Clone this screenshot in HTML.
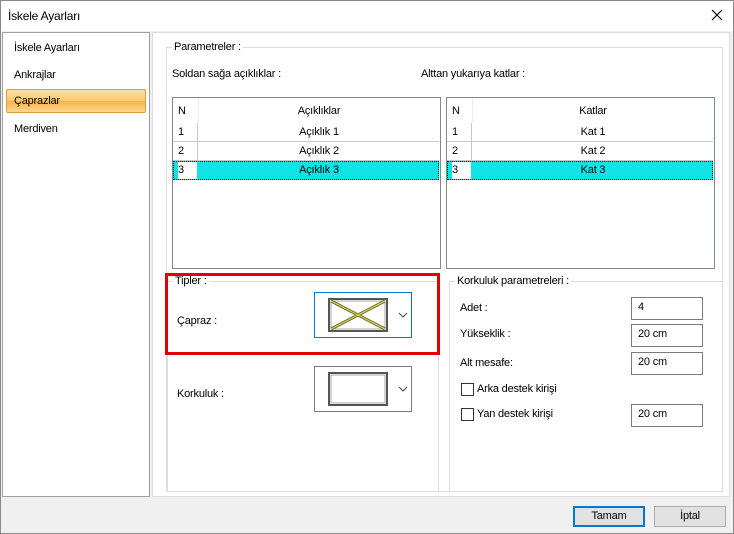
<!DOCTYPE html>
<html><head><style>
*{margin:0;padding:0;box-sizing:border-box}
body{width:734px;height:534px;overflow:hidden;background:#f0f0f0;font-family:"Liberation Sans",sans-serif;font-size:11px;letter-spacing:-0.2px;color:#000;position:relative}
.a{position:absolute}
.win{left:0;top:0;width:734px;height:534px;border:1px solid #888}
.title{left:1px;top:1px;width:732px;height:30px;background:#fff}
.panel{background:#fff;border:1px solid #a0a0a0}
.gb{border:1px solid #dcdcdc}
.leg{background:#fff;padding:0 2px}
.tbl{border:1px solid #828790;background:#fff}
.row{position:absolute;left:0;width:266px;height:19px;border-bottom:1px solid #c8c8c8}
.n{position:absolute;left:5px;top:3px}
.c{position:absolute;left:26px;right:0;top:3px;text-align:center}
.inp{border:1px solid #7a7a7a;background:#fff;width:72px;height:23px;padding:3px 6px}
.cb{width:13px;height:13px;border:1px solid #333;background:#fff}
.btn{width:72px;height:21px;border:1px solid #adadad;background:#e1e1e1;text-align:center;line-height:19px}
</style></head><body>
<div class="a win"></div>
<div class="a title"></div>
<div class="a" style="left:8px;top:9px;font-size:12px">İskele Ayarları</div>
<svg class="a" style="left:711px;top:9px" width="12" height="12"><path d="M1 1L11 11M11 1L1 11" stroke="#000" stroke-width="1.2"/></svg>

<div class="a panel" style="left:2px;top:32px;width:148px;height:465px"></div>
<div class="a" style="left:14px;top:42px">İskele Ayarları</div>
<div class="a" style="left:14px;top:69px">Ankrajlar</div>
<div class="a" style="left:6px;top:89px;width:140px;height:24px;border:1px solid #d9a040;border-radius:2px;background:linear-gradient(#fde0a8,#fbc86c 50%,#f9b24a 51%,#fcd690)"></div>
<div class="a" style="left:14px;top:95px">Çaprazlar</div>
<div class="a" style="left:14px;top:123px">Merdiven</div>

<div class="a panel" style="left:152px;top:32px;width:578px;height:465px;border-color:#dcdcdc"></div>
<div class="a gb" style="left:166px;top:47px;width:557px;height:445px"></div>
<div class="a leg" style="left:172px;top:41px">Parametreler :</div>
<div class="a" style="left:172px;top:68px">Soldan sağa açıklıklar :</div>
<div class="a" style="left:421px;top:68px">Alttan yukarıya katlar :</div>

<div class="a tbl" style="left:172px;top:97px;width:269px;height:172px">
 <div class="row" style="top:0;height:25px;border:none"><span class="n" style="top:7px">N</span><div class="a" style="left:25px;top:0;width:1px;height:25px;background:#eee"></div><span class="c" style="top:7px">Açıklıklar</span></div>
 <div class="row" style="top:25px"><span class="n">1</span><div class="a" style="left:24px;top:0;width:1px;height:19px;background:#c8c8c8"></div><span class="c">Açıklık 1</span></div>
 <div class="row" style="top:44px"><span class="n">2</span><div class="a" style="left:24px;top:0;width:1px;height:19px;background:#c8c8c8"></div><span class="c">Açıklık 2</span></div>
 <div class="row" style="top:63px;border:1px dotted #000;background:#10e3e3"><div class="a" style="left:4px;top:0;width:19px;height:17px;background:#fff"></div><span class="n" style="left:4px;top:2px">3</span><span class="c" style="top:2px">Açıklık 3</span></div>
</div>
<div class="a tbl" style="left:446px;top:97px;width:269px;height:172px">
 <div class="row" style="top:0;height:25px;border:none"><span class="n" style="top:7px">N</span><div class="a" style="left:25px;top:0;width:1px;height:25px;background:#eee"></div><span class="c" style="top:7px">Katlar</span></div>
 <div class="row" style="top:25px"><span class="n">1</span><div class="a" style="left:24px;top:0;width:1px;height:19px;background:#c8c8c8"></div><span class="c">Kat 1</span></div>
 <div class="row" style="top:44px"><span class="n">2</span><div class="a" style="left:24px;top:0;width:1px;height:19px;background:#c8c8c8"></div><span class="c">Kat 2</span></div>
 <div class="row" style="top:63px;border:1px dotted #000;background:#10e3e3"><div class="a" style="left:4px;top:0;width:19px;height:17px;background:#fff"></div><span class="n" style="left:4px;top:2px">3</span><span class="c" style="top:2px">Kat 3</span></div>
</div>

<div class="a gb" style="left:167px;top:281px;width:272px;height:211px"></div>
<div class="a leg" style="left:173px;top:275px">Tipler :</div>
<div class="a" style="left:165px;top:273px;width:275px;height:82px;border:3px solid #e00000"></div>
<div class="a" style="left:177px;top:315px">Çapraz :</div>
<div class="a" style="left:314px;top:292px;width:98px;height:46px;border:1px solid #0078d7;background:#fff"></div>
<svg class="a" style="left:328px;top:298px" width="60" height="34"><rect x="1" y="1" width="58" height="32" fill="#fff" stroke="#555" stroke-width="2"/><rect x="3" y="3" width="54" height="28" fill="none" stroke="#aaa" stroke-width="1"/><path d="M3 3L57 31M57 3L3 31" stroke="#6b6b30" stroke-width="3"/><path d="M3 3L57 31M57 3L3 31" stroke="#d8d050" stroke-width="1.2"/></svg>
<svg class="a" style="left:398px;top:312px" width="10" height="6"><path d="M1 1L5 5L9 1" fill="none" stroke="#444"/></svg>
<div class="a" style="left:177px;top:388px">Korkuluk :</div>
<div class="a" style="left:314px;top:366px;width:98px;height:46px;border:1px solid #7a7a7a;background:#fff"></div>
<svg class="a" style="left:328px;top:372px" width="60" height="34"><rect x="1" y="1" width="58" height="32" fill="#fff" stroke="#555" stroke-width="2"/><rect x="3" y="3" width="54" height="28" fill="none" stroke="#aaa"/></svg>
<svg class="a" style="left:398px;top:386px" width="10" height="6"><path d="M1 1L5 5L9 1" fill="none" stroke="#444"/></svg>

<div class="a gb" style="left:449px;top:281px;width:274px;height:211px"></div>
<div class="a leg" style="left:455px;top:275px">Korkuluk parametreleri :</div>
<div class="a" style="left:460px;top:302px">Adet :</div>
<div class="a inp" style="left:631px;top:297px">4</div>
<div class="a" style="left:460px;top:328px">Yükseklik :</div>
<div class="a inp" style="left:631px;top:324px">20 cm</div>
<div class="a" style="left:460px;top:357px">Alt mesafe:</div>
<div class="a inp" style="left:631px;top:352px">20 cm</div>
<div class="a cb" style="left:461px;top:383px"></div>
<div class="a" style="left:477px;top:383px">Arka destek kirişi</div>
<div class="a cb" style="left:461px;top:408px"></div>
<div class="a" style="left:477px;top:408px">Yan destek kirişi</div>
<div class="a inp" style="left:631px;top:404px">20 cm</div>

<div class="a btn" style="left:573px;top:506px;border:2px solid #0078d7;line-height:17px">Tamam</div>
<div class="a btn" style="left:654px;top:506px">İptal</div>
</body></html>
